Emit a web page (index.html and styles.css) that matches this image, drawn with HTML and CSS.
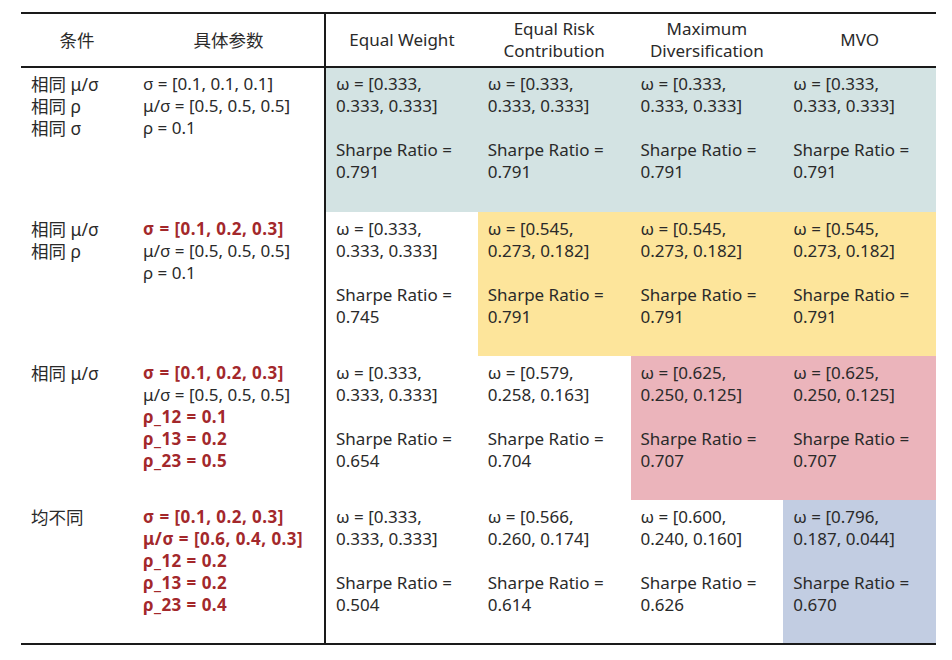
FILE: index.html
```html
<!DOCTYPE html>
<html lang="zh">
<head>
<meta charset="utf-8">
<title>Portfolio comparison</title>
<link rel="stylesheet" href="styles.css">
</head>
<body>
<table class="grid">
  <colgroup>
    <col class="c-cond"><col class="c-param"><col class="c-data"><col class="c-data"><col class="c-data"><col class="c-data">
  </colgroup>
  <thead>
    <tr>
      <th class="cjk">条件</th>
      <th class="cjk">具体参数</th>
      <th class="split">Equal Weight</th>
      <th>Equal Risk<br>Contribution</th>
      <th>Maximum<br>Diversification</th>
      <th>MVO</th>
    </tr>
  </thead>
  <tbody>
    <tr>
      <td class="cond">相同 μ/σ<br>相同 ρ<br>相同 σ</td>
      <td class="param">σ = [0.1, 0.1, 0.1]<br>μ/σ = [0.5, 0.5, 0.5]<br>ρ = 0.1</td>
      <td class="split cyan"><div class="w">ω = [0.333,<br>0.333, 0.333]</div><div class="sr">Sharpe Ratio =<br>0.791</div></td>
      <td class="cyan"><div class="w">ω = [0.333,<br>0.333, 0.333]</div><div class="sr">Sharpe Ratio =<br>0.791</div></td>
      <td class="cyan"><div class="w">ω = [0.333,<br>0.333, 0.333]</div><div class="sr">Sharpe Ratio =<br>0.791</div></td>
      <td class="cyan"><div class="w">ω = [0.333,<br>0.333, 0.333]</div><div class="sr">Sharpe Ratio =<br>0.791</div></td>
    </tr>
    <tr>
      <td class="cond">相同 μ/σ<br>相同 ρ</td>
      <td class="param"><span class="hl">σ = [0.1, 0.2, 0.3]</span><br>μ/σ = [0.5, 0.5, 0.5]<br>ρ = 0.1</td>
      <td class="split"><div class="w">ω = [0.333,<br>0.333, 0.333]</div><div class="sr">Sharpe Ratio =<br>0.745</div></td>
      <td class="yellow"><div class="w">ω = [0.545,<br>0.273, 0.182]</div><div class="sr">Sharpe Ratio =<br>0.791</div></td>
      <td class="yellow"><div class="w">ω = [0.545,<br>0.273, 0.182]</div><div class="sr">Sharpe Ratio =<br>0.791</div></td>
      <td class="yellow"><div class="w">ω = [0.545,<br>0.273, 0.182]</div><div class="sr">Sharpe Ratio =<br>0.791</div></td>
    </tr>
    <tr>
      <td class="cond">相同 μ/σ</td>
      <td class="param"><span class="hl">σ = [0.1, 0.2, 0.3]</span><br>μ/σ = [0.5, 0.5, 0.5]<br><span class="hl">ρ_12 = 0.1<br>ρ_13 = 0.2<br>ρ_23 = 0.5</span></td>
      <td class="split"><div class="w">ω = [0.333,<br>0.333, 0.333]</div><div class="sr">Sharpe Ratio =<br>0.654</div></td>
      <td><div class="w">ω = [0.579,<br>0.258, 0.163]</div><div class="sr">Sharpe Ratio =<br>0.704</div></td>
      <td class="pink"><div class="w">ω = [0.625,<br>0.250, 0.125]</div><div class="sr">Sharpe Ratio =<br>0.707</div></td>
      <td class="pink"><div class="w">ω = [0.625,<br>0.250, 0.125]</div><div class="sr">Sharpe Ratio =<br>0.707</div></td>
    </tr>
    <tr>
      <td class="cond">均不同</td>
      <td class="param"><span class="hl">σ = [0.1, 0.2, 0.3]<br>μ/σ = [0.6, 0.4, 0.3]<br>ρ_12 = 0.2<br>ρ_13 = 0.2<br>ρ_23 = 0.4</span></td>
      <td class="split"><div class="w">ω = [0.333,<br>0.333, 0.333]</div><div class="sr">Sharpe Ratio =<br>0.504</div></td>
      <td><div class="w">ω = [0.566,<br>0.260, 0.174]</div><div class="sr">Sharpe Ratio =<br>0.614</div></td>
      <td><div class="w">ω = [0.600,<br>0.240, 0.160]</div><div class="sr">Sharpe Ratio =<br>0.626</div></td>
      <td class="blue"><div class="w">ω = [0.796,<br>0.187, 0.044]</div><div class="sr">Sharpe Ratio =<br>0.670</div></td>
    </tr>
  </tbody>
</table>
</body>
</html>
```
FILE: styles.css
```css
html, body {
  margin: 0;
  padding: 0;
  background: #ffffff;
}
body {
  font-family: "Noto Sans", "Noto Sans CJK SC", sans-serif;
  font-size: 17px;
  line-height: 22px;
  color: #2a2a2a;
}
.grid {
  border-collapse: collapse;
  table-layout: fixed;
  width: 915px;
  margin: 12px 0 0 21px;
}
.c-cond { width: 112px; }
.c-param { width: 192px; }
.c-data { width: 152.75px; }
.grid th {
  font-weight: normal;
  text-align: center;
  vertical-align: middle;
  height: 52px;
  padding: 0 4px;
  border-top: 2px solid #1a1a1a;
  border-bottom: 2px solid #1a1a1a;
  line-height: 22px;
}
.grid th.cjk {
  font-size: 17.5px;
}
.grid td {
  vertical-align: top;
  height: 144px;
  padding: 6px 10px 0 10px;
  box-sizing: border-box;
}
.grid tbody tr:first-child td {
  height: 145px;
  padding-top: 5px;
}
.grid tbody tr:last-child td {
  border-bottom: 2px solid #1a1a1a;
}
.grid .split {
  border-left: 2px solid #1a1a1a;
}
.cond {
  font-family: "Noto Sans", "Noto Sans CJK SC", sans-serif;
  font-size: 17.5px;
}
.cond, .param {
  padding-left: 10px;
}
.sr {
  margin-top: 22px;
}
.hl {
  color: #a3282b;
  font-weight: bold;
  letter-spacing: 0.45px;
}
.cyan { background: #d3e3e3; }
.yellow { background: #fde59b; }
.pink { background: #ebb4bb; }
.blue { background: #c2cde2; }
```
